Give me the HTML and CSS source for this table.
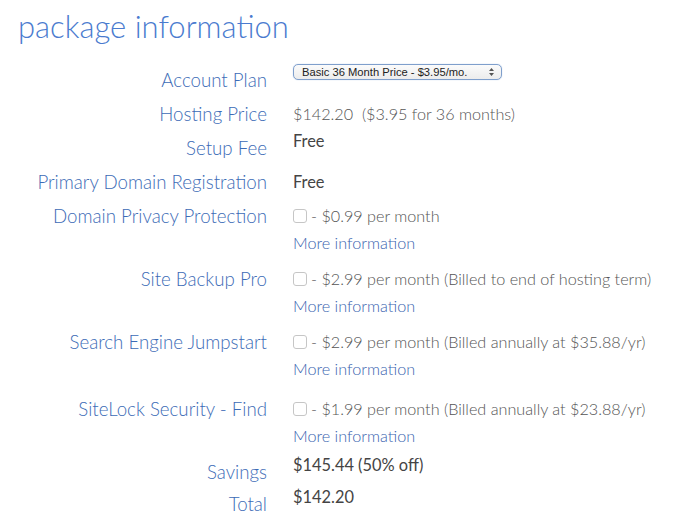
FILE: index.html
```html
<!DOCTYPE html>
<html>
<head>
<meta charset="utf-8">
<link rel="stylesheet" href="styles.css">
</head>
<body>
<h1 class="title">package information</h1>
<div class="table">
  <div class="row">
    <div class="label">Account Plan</div>
    <div class="value up">
      <div class="select">
        <span>Basic 36 Month Price - $3.95/mo.</span>
        <svg class="arrows" width="7" height="10" viewBox="0 0 7 10"><path d="M1 4 L3.5 1 L6 4 Z M1 6 L3.5 9 L6 6 Z" fill="#555"/></svg>
      </div>
    </div>
  </div>
  <div class="row">
    <div class="label">Hosting Price</div>
    <div class="value">$142.20&nbsp; ($3.95 for 36 months)</div>
  </div>
  <div class="row">
    <div class="label">Setup Fee</div>
    <div class="value up strong">Free</div>
  </div>
  <div class="row">
    <div class="label">Primary Domain Registration</div>
    <div class="value strong">Free</div>
  </div>
  <div class="row addon">
    <div class="label">Domain Privacy Protection</div>
    <div class="value">
      <div class="opt"><span class="box"></span>- $0.99 per month</div>
      <a class="more">More information</a>
    </div>
  </div>
  <div class="row addon">
    <div class="label">Site Backup Pro</div>
    <div class="value">
      <div class="opt"><span class="box"></span>- $2.99 per month (Billed to end of hosting term)</div>
      <a class="more">More information</a>
    </div>
  </div>
  <div class="row addon tall">
    <div class="label">Search Engine Jumpstart</div>
    <div class="value">
      <div class="opt"><span class="box"></span>- $2.99 per month (Billed annually at $35.88/yr)</div>
      <a class="more">More information</a>
    </div>
  </div>
  <div class="row addon">
    <div class="label">SiteLock Security - Find</div>
    <div class="value">
      <div class="opt"><span class="box"></span>- $1.99 per month (Billed annually at $23.88/yr)</div>
      <a class="more">More information</a>
    </div>
  </div>
  <div class="row short">
    <div class="label">Savings</div>
    <div class="value up strong">$145.44 (50% off)</div>
  </div>
  <div class="row">
    <div class="label">Total</div>
    <div class="value up strong">$142.20</div>
  </div>
</div>
</body>
</html>
```
FILE: styles.css
```css
html, body {
  margin: 0;
  padding: 0;
  background: #ffffff;
  font-family: Lato, "Open Sans", sans-serif;
}

.title {
  margin: 6px 0 0 18px;
  font-size: 31px;
  line-height: 40px;
  font-weight: 300;
  color: #4a7bcf;
}

.table {
  display: flex;
  flex-direction: column;
  margin-top: 17px;
}

.row {
  display: flex;
  align-items: flex-start;
  min-height: 34px;
}

.row.short { min-height: 32px; height: 32px; }
.row.addon { min-height: 63px; }
.row.addon.tall { min-height: 67px; }

.label {
  width: 267px;
  flex: none;
  text-align: right;
  font-size: 18.7px;
  line-height: 34px;
  font-weight: 300;
  color: #3c6bb6;
}

.value {
  margin-left: 26px;
  padding-top: 4px;
  font-size: 16.2px;
  line-height: 26px;
  font-weight: 300;
  color: #555;
}

.value.up {
  padding-top: 0;
  line-height: 20px;
}

.value.strong {
  font-size: 16.4px;
  color: #444;
  font-weight: 400;
}

.select {
  display: flex;
  align-items: center;
  justify-content: space-between;
  height: 16px;
  margin-top: 1px;
  padding: 0 6px 0 8px;
  box-sizing: border-box;
  width: 209px;
  border: 1px solid #7f9fcc;
  border-radius: 5px;
  background: linear-gradient(#fbfbfb, #ececec);
  box-shadow: 0 0 1px #9bb6de;
  font-family: "Liberation Sans", Arial, sans-serif;
  font-size: 11.2px;
  font-weight: 400;
  line-height: 14px;
  color: #222;
}

.opt {
  display: flex;
  align-items: center;
}

.box {
  width: 12px;
  height: 12px;
  border: 1px solid #c6c6c6;
  border-radius: 3px;
  margin-right: 4px;
  background: #fff;
}

.more {
  display: block;
  color: #3a64b0;
  line-height: 27px;
  cursor: pointer;
}
```
